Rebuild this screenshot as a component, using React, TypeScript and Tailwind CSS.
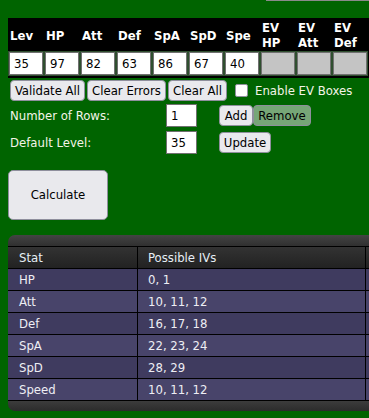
import React from 'react';

const statCols = [
  { label: ['Lev'], value: '35' },
  { label: ['HP'], value: '97' },
  { label: ['Att'], value: '82' },
  { label: ['Def'], value: '63' },
  { label: ['SpA'], value: '86' },
  { label: ['SpD'], value: '67' },
  { label: ['Spe'], value: '40' },
  { label: ['EV', 'HP'], value: null },
  { label: ['EV', 'Att'], value: null },
  { label: ['EV', 'Def'], value: null },
];

const results: [string, string][] = [
  ['HP', '0, 1'],
  ['Att', '10, 11, 12'],
  ['Def', '16, 17, 18'],
  ['SpA', '22, 23, 24'],
  ['SpD', '28, 29'],
  ['Speed', '10, 11, 12'],
];

const Btn: React.FC<{ children: React.ReactNode; className?: string }> = ({ children, className }) => (
  <button
    className={`h-[21px] px-px whitespace-nowrap text-center rounded-[4px] border border-[#8f8f9d] text-[13px] leading-none text-black ${className ?? 'bg-[#e9e9ed]'}`}
  >
    {children}
  </button>
);

export default function App() {
  return (
    <div className="w-[369px] h-[418px] overflow-hidden bg-[#006400] font-['DejaVu_Sans_Condensed','DejaVu_Sans',sans-serif] text-[13px]">
      <div className="ml-[266px] w-[110px] h-px bg-[#8a8a8a]" />

      {/* stat entry table */}
      <div className="mt-[17px] ml-[8px] w-max bg-black pl-px pr-[4px] pb-[3px] flex gap-[2px]">
        {statCols.map((c, i) => (
          <div key={i} className="w-[34px] flex flex-col">
            <div className="h-[34px] flex flex-col justify-center pl-px text-white font-bold text-[13px] leading-[15px]">
              {c.label.map(l => (
                <span key={l}>{l}</span>
              ))}
            </div>
            <div
              className={`h-[23px] border border-[#707070] ring-1 ring-[#2f4f2f] px-[4px] flex items-center text-[13px] text-black ${
                c.value === null ? 'bg-[#c4c4c4]' : 'bg-white'
              }`}
            >
              {c.value}
            </div>
          </div>
        ))}
      </div>

      {/* action buttons */}
      <div className="mt-[2px] ml-[10px] flex items-center gap-[2px]">
        <Btn className="w-[75px] bg-[#e9e9ed]">Validate All</Btn>
        <Btn className="w-[79px] bg-[#e9e9ed]">Clear Errors</Btn>
        <Btn className="w-[59px] bg-[#e9e9ed]">Clear All</Btn>
        <div className="ml-[6px] w-[13px] h-[13px] bg-white border border-[#8f8f9d] rounded-[2px]" />
        <span className="ml-[5px] text-[#f4f4e8] whitespace-nowrap">Enable EV Boxes</span>
      </div>

      {/* rows / level */}
      <div className="mt-[3px] ml-[10px] flex flex-col gap-[4px]">
        <div className="flex items-center h-[23px]">
          <span className="w-[156px] text-[#f4f4e8]">Number of Rows:</span>
          <div className="w-[31px] h-[23px] bg-white border border-[#707070] px-[4px] flex items-center text-black">1</div>
          <div className="ml-[22px] flex gap-0">
            <Btn className="w-[34px] bg-[#e9e9ed]">Add</Btn>
            <Btn className="w-[58px] bg-[#77a677] border-[#5f8a5f] text-[#1d2e1d]">Remove</Btn>
          </div>
        </div>
        <div className="flex items-center h-[23px]">
          <span className="w-[156px] text-[#f4f4e8]">Default Level:</span>
          <div className="w-[31px] h-[23px] bg-white border border-[#707070] px-[4px] flex items-center text-black">35</div>
          <div className="ml-[22px]">
            <Btn className="w-[52px] bg-[#e9e9ed]">Update</Btn>
          </div>
        </div>
      </div>

      <button className="mt-[16px] ml-[8px] w-[100px] h-[50px] rounded-[5px] bg-[#e9e9ed] border border-[#8f8f9d] text-[13px] text-black">
        Calculate
      </button>

      {/* results */}
      <div className="mt-[15px] ml-[8px] w-[400px]">
        <div className="h-[12px] rounded-tl-[7px] bg-gradient-to-b from-[#444] to-[#303030] border-b border-black" />
        <div className="grid grid-cols-[129px_227px_44px] gap-px bg-black">
          <div className="h-[21px] pl-[11px] flex items-center bg-gradient-to-b from-[#333] to-[#222] text-[#e6eef6]">Stat</div>
          <div className="h-[21px] pl-[10px] flex items-center bg-gradient-to-b from-[#333] to-[#222] text-[#e6eef6]">Possible IVs</div>
          <div className="h-[21px] bg-gradient-to-b from-[#333] to-[#222]" />
          {results.map(([s, v], i) => {
            const bg = i % 2 === 0 ? 'bg-[#3f3b5f]' : 'bg-[#48446a]';
            return (
              <React.Fragment key={s}>
                <div className={`h-[21px] pl-[11px] flex items-center text-[#eeeef4] ${bg}`}>{s}</div>
                <div className={`h-[21px] pl-[10px] flex items-center text-[#eeeef4] ${bg}`}>{v}</div>
                <div className={`h-[21px] ${bg}`} />
              </React.Fragment>
            );
          })}
        </div>
        <div className="h-[11px] rounded-bl-[7px] bg-gradient-to-b from-[#3c3c3c] to-[#2c2c2c] border-t border-black" />
      </div>
    </div>
  );
}
